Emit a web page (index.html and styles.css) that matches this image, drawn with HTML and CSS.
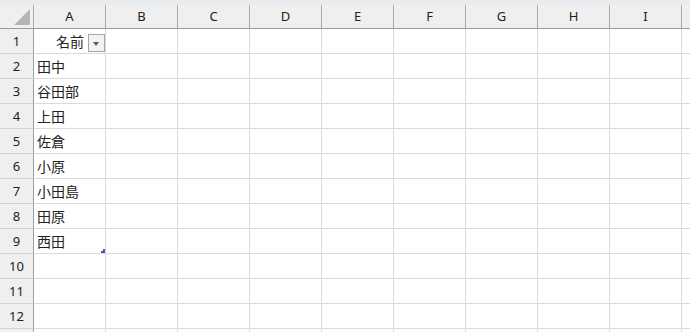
FILE: index.html
```html
<!DOCTYPE html>
<html lang="ja">
<head>
    <meta charset="UTF-8">
    <title>Sheet1</title>
    <link rel="stylesheet" href="styles.css">
</head>
<body>
    <div class="topbar"></div>
    <div class="sheet">
        <div class="corner"><span class="triangle"></span></div>
        <div class="colhead">A</div>
        <div class="colhead">B</div>
        <div class="colhead">C</div>
        <div class="colhead">D</div>
        <div class="colhead">E</div>
        <div class="colhead">F</div>
        <div class="colhead">G</div>
        <div class="colhead">H</div>
        <div class="colhead">I</div>
        <div class="colhead"></div>
    </div>
    <div class="sheet" id="rows"></div>

    <script>
        const names = ['名前', '田中', '谷田部', '上田', '佐倉', '小原', '小田島', '田原', '西田'];
        const rows = document.getElementById('rows');

        // 12 visible rows plus the sliver of row 13 at the bottom edge
        for (let r = 1; r <= 13; r++) {
            let html = `<div class="rowhead">${r <= 12 ? r : ''}</div>`;
            for (let c = 0; c < 10; c++) {
                if (c === 0 && r === 1) {
                    html += `<div class="cell header-cell">${names[0]}<span class="filter"><span class="arrow"></span></span></div>`;
                } else if (c === 0 && r <= 9) {
                    html += `<div class="cell">${names[r - 1]}${r === 9 ? '<span class="handle"></span>' : ''}</div>`;
                } else {
                    html += `<div class="cell"></div>`;
                }
            }
            rows.insertAdjacentHTML('beforeend', html);
        }
    </script>
</body>
</html>
```

FILE: styles.css
```css
html, body {
    margin: 0;
    padding: 0;
    height: 100%;
    overflow: hidden;
    background: #ffffff;
}
body {
    font-family: "Noto Sans", "Noto Sans CJK JP", sans-serif;
    color: #222222;
}
.topbar {
    height: 5px;
    background: #e9ecef;
}
.sheet {
    display: grid;
    grid-template-columns: 34px repeat(10, 72px);
    width: max-content;
}
.corner, .colhead {
    height: 24px;
    box-sizing: border-box;
    background: #efefef;
    border-right: 1px solid #ababab;
    border-bottom: 1px solid #9b9b9b;
}
.corner {
    position: relative;
}
.triangle {
    position: absolute;
    right: 3px;
    bottom: 3px;
    width: 0;
    height: 0;
    border-left: 16px solid transparent;
    border-bottom: 16px solid #b5b5b5;
}
.colhead {
    font-size: 13px;
    line-height: 23px;
    text-align: center;
}
.rowhead {
    height: 25px;
    box-sizing: border-box;
    background: #efefef;
    border-right: 1px solid #9e9e9e;
    border-bottom: 1px solid #d4d4d4;
    font-size: 13px;
    line-height: 24px;
    text-align: center;
}
.cell {
    position: relative;
    height: 25px;
    box-sizing: border-box;
    border-right: 1px solid #dadada;
    border-bottom: 1px solid #dadada;
    padding-left: 3px;
    font-family: "Noto Sans CJK JP", sans-serif;
    font-size: 14px;
    line-height: 24px;
    white-space: nowrap;
}
.header-cell {
    text-align: right;
    padding-right: 21px;
}
.filter {
    position: absolute;
    left: 54px;
    top: 5px;
    width: 17px;
    height: 18px;
    box-sizing: border-box;
    border: 1px solid #a6a6a6;
    background: #f3f3f3;
}
.arrow {
    position: absolute;
    left: 4px;
    top: 7px;
    width: 0;
    height: 0;
    border-left: 3.5px solid transparent;
    border-right: 3.5px solid transparent;
    border-top: 4px solid #5a5a5a;
}
.handle {
    position: absolute;
    right: 0;
    bottom: 0;
    width: 4px;
    height: 4px;
    background: #4356b8;
    clip-path: polygon(50% 0, 100% 0, 100% 100%, 0 100%, 0 50%, 50% 50%);
}
```
